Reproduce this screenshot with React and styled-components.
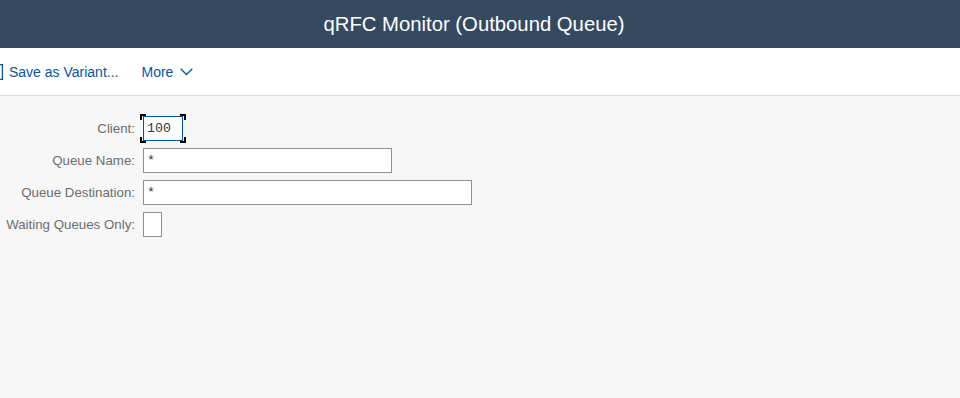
import React from 'react'
import styled, { createGlobalStyle } from 'styled-components'

const Global = createGlobalStyle`
  body {
    margin: 0;
    background: #f7f7f7;
    font-family: "Liberation Sans", Arial, sans-serif;
    overflow: hidden;
  }
`

const Page = styled.div`
  display: flex;
  flex-direction: column;
  height: 398px;
`

const Header = styled.header`
  height: 48px;
  background: #354a5f;
  display: flex;
  align-items: center;
  justify-content: center;
  padding-right: 12px;
`

const Title = styled.h1`
  margin: 0;
  color: #ffffff;
  font-size: 20.3px;
  font-weight: normal;
`

const Toolbar = styled.div`
  height: 47px;
  background: #ffffff;
  border-bottom: 1px solid #d9d9d9;
  display: flex;
  align-items: center;
  gap: 25px;
`

const ToolButton = styled.button`
  display: flex;
  align-items: center;
  gap: ${props => props.gap || 6}px;
  margin-left: ${props => props.offset || 0}px;
  padding: 0;
  border: none;
  background: none;
  color: #0854a0;
  font-family: inherit;
  font-size: 14px;
  cursor: pointer;
`

const Form = styled.div`
  display: grid;
  grid-template-columns: 135px max-content;
  grid-auto-rows: 25px;
  column-gap: 8px;
  row-gap: 7px;
  padding-top: 20px;
`

const Label = styled.label`
  display: flex;
  align-items: center;
  justify-content: flex-end;
  color: #6a6d70;
  font-size: 13.3px;
  white-space: nowrap;
`

const Field = styled.div`
  position: relative;
  width: ${props => props.width}px;
  height: 25px;
  box-sizing: border-box;
  background: #ffffff;
  border: 1px solid ${props => (props.focused ? '#0854a0' : '#89919a')};
  display: flex;
  align-items: center;
  padding-left: 3px;
  font-family: "Liberation Mono", "DejaVu Sans Mono", monospace;
  font-size: 13.3px;
  color: #32363a;
`

const Corner = styled.span`
  position: absolute;
  width: 4px;
  height: 4px;
  border-color: #000000;
  border-style: solid;
  border-width: 0;
  ${props => props.top ? 'top: -3px; border-top-width: 2px;' : 'bottom: -3px; border-bottom-width: 2px;'}
  ${props => props.left ? 'left: -4px; border-left-width: 2px;' : 'right: -4px; border-right-width: 2px;'}
`

function FocusCorners() {
  return (
    <>
      <Corner top left />
      <Corner top />
      <Corner left />
      <Corner />
    </>
  )
}

export default function App() {
  return (
    <Page>
      <Global />
      <Header>
        <Title>qRFC Monitor (Outbound Queue)</Title>
      </Header>
      <Toolbar>
        <ToolButton offset={-13} gap={6}>
          <svg width="16" height="16" viewBox="0 0 16 16">
            <rect x="0.5" y="0.5" width="15" height="15" fill="none" stroke="#0854a0" strokeWidth="1.5" />
          </svg>
          Save as Variant...
        </ToolButton>
        <ToolButton offset={-2} gap={7}>
          More
          <svg width="13" height="8" viewBox="0 0 13 8">
            <path d="M0.7 0.7 L6.5 6.5 L12.3 0.7" fill="none" stroke="#0854a0" strokeWidth="1.3" />
          </svg>
        </ToolButton>
      </Toolbar>
      <Form>
        <Label>Client:</Label>
        <Field width={40} focused>
          100
          <FocusCorners />
        </Field>
        <Label>Queue Name:</Label>
        <Field width={249}>*</Field>
        <Label>Queue Destination:</Label>
        <Field width={329}>*</Field>
        <Label>Waiting Queues Only:</Label>
        <Field width={19} />
      </Form>
    </Page>
  )
}
